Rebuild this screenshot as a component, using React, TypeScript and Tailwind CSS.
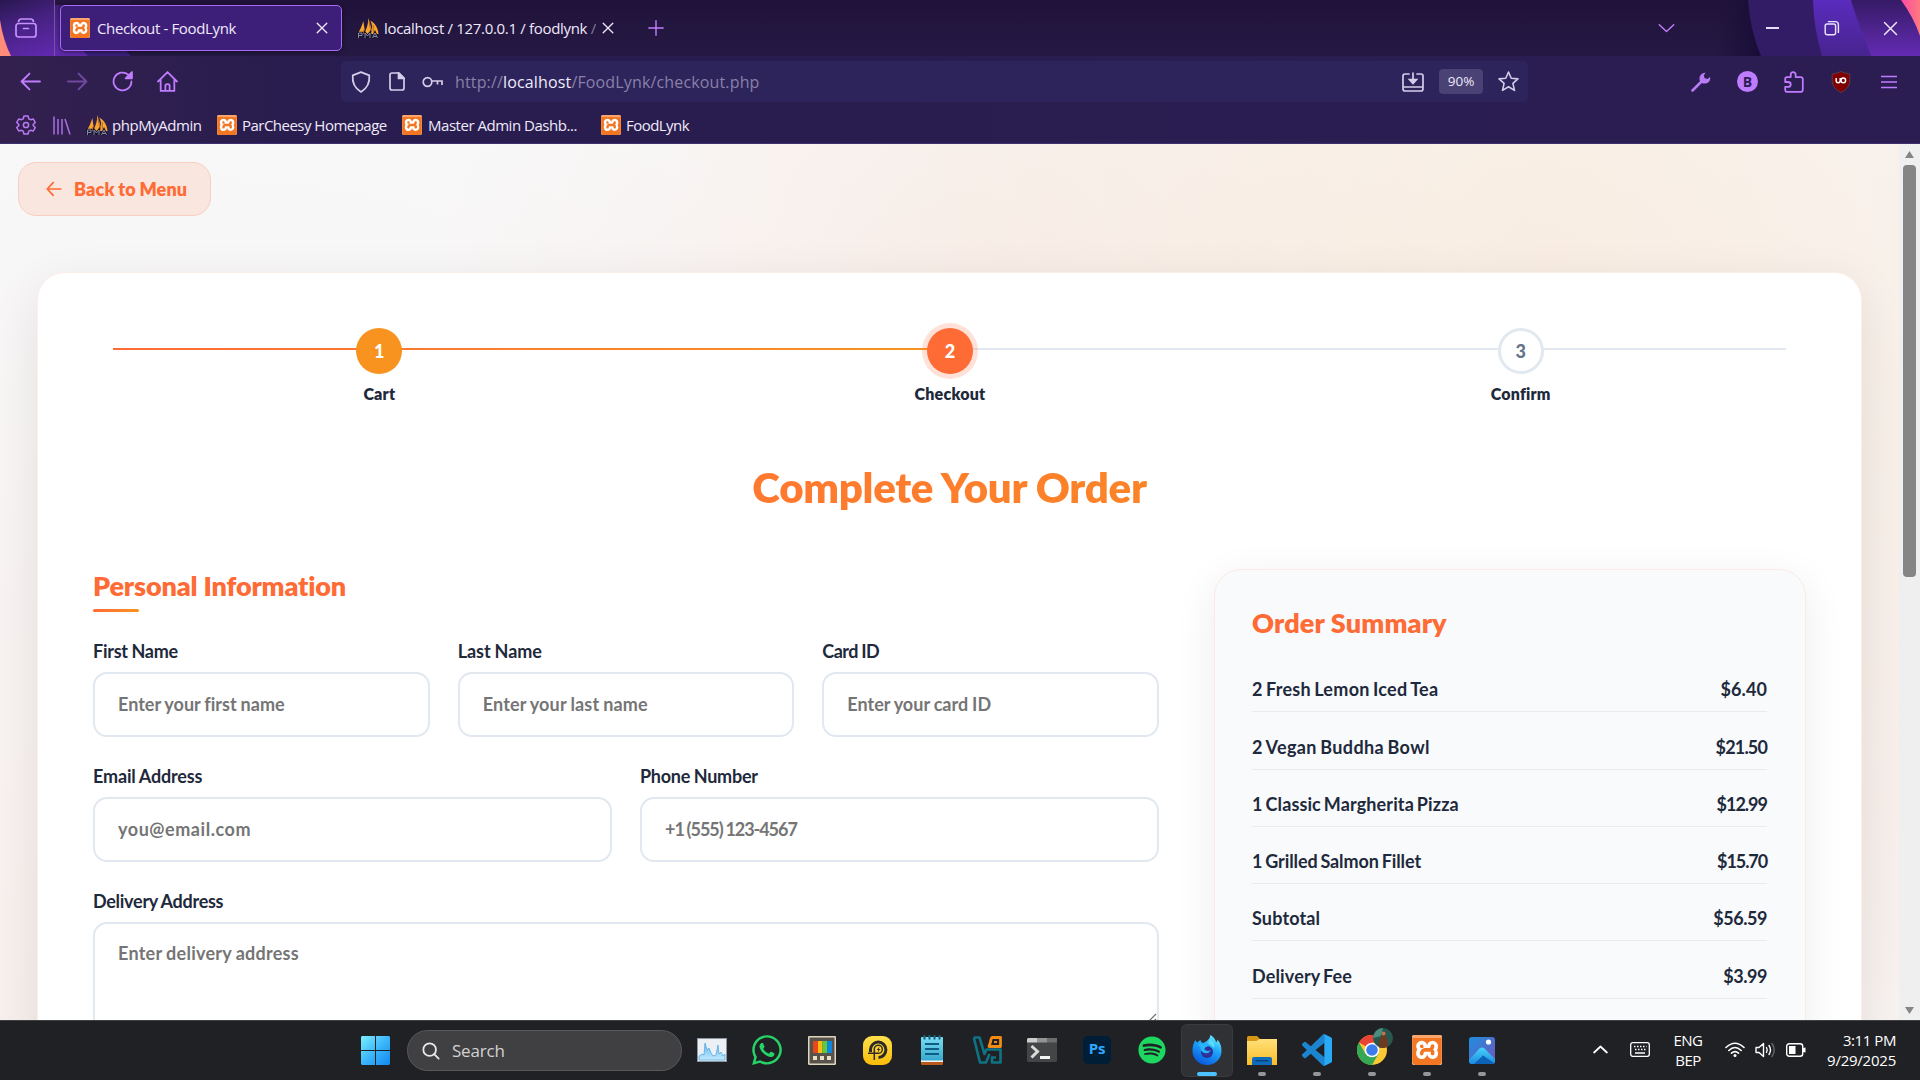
import type { ReactNode } from "react";
import { FaWhatsapp, FaSpotify } from "react-icons/fa";
import { SiXampp } from "react-icons/si";

const uiFont = "font-['Open_Sans','Noto_Sans',sans-serif]";
const pageFont = "font-['Lato','Open_Sans',sans-serif]";

function Stroke({ size = 20, w = 1.6, className = "", children }: { size?: number; w?: number; className?: string; children: ReactNode }) {
  return (
    <svg width={size} height={size} viewBox="0 0 20 20" fill="none" stroke="currentColor" strokeWidth={w} strokeLinecap="round" strokeLinejoin="round" className={`shrink-0 ${className}`}>
      {children}
    </svg>
  );
}

const XamppIcon = ({ size = 20 }: { size?: number }) => (
  <span className="relative flex shrink-0">
    <SiXampp size={size} className="rounded-[2px] bg-white text-[#f37623]" />
    <span className="absolute inset-x-px top-0 h-[10%] bg-[#f9a56c]" />
  </span>
);

function PmaIcon() {
  return (
    <svg width="22" height="21" viewBox="0 0 22 21" className="shrink-0">
      <path d="M0.500 16C3 12 5 8 6.300 3L8.300 16ZM7 16C10 10 11.300 6 11.300 0L16 16ZM14 16C15.800 11 15.300 6 13.300 2.500C18.500 5.500 21 10 21.500 16Z" fill="#fba42e" />
      <path d="M12 4L14 14M16.300 7V14" stroke="#7d4a1c" strokeWidth="0.600" />
      <path d="M1.500 20V15H5V17.500H1.500M8 20V15L10.500 18L13 15V20M15.500 20L18 15L20.500 20M16.500 18.500H19.500" fill="none" stroke="#14132b" strokeWidth="2.600" />
      <path d="M1.500 20V15H5V17.500H1.500M8 20V15L10.500 18L13 15V20M15.500 20L18 15L20.500 20M16.500 18.500H19.500" fill="none" stroke="#9696b0" strokeWidth="0.900" />
    </svg>
  );
}

const CloseX = ({ className = "" }: { className?: string }) => (
  <Stroke size={12} w={2.200} className={className}>
    <path d="M2 2L18 18M18 2L2 18" />
  </Stroke>
);

function TabStrip() {
  return (
    <div className="relative flex h-14 w-full shrink-0 items-center bg-linear-to-b from-[#20123a] to-[#251944]">
      <svg className="absolute inset-0" width="1920" height="56" viewBox="0 0 1920 56">
        <defs>
          <linearGradient id="lp" x1="0" y1="0" x2="0.5" y2="1"><stop offset="0" stopColor="#29174f" /><stop offset="0.4" stopColor="#44217f" /><stop offset="1" stopColor="#6029ad" /></linearGradient>
          <linearGradient id="rp" x1="0" y1="0" x2="0" y2="1"><stop offset="0" stopColor="#351b66" /><stop offset="1" stopColor="#642bb3" /></linearGradient>
          <linearGradient id="rb" x1="0" y1="0" x2="0" y2="1"><stop offset="0" stopColor="#5a2bbd" /><stop offset="1" stopColor="#47248f" /></linearGradient>
          <linearGradient id="pk" x1="0" y1="0" x2="1" y2="0"><stop offset="0" stopColor="#ff4aa2" /><stop offset="1" stopColor="#ff7a80" /></linearGradient>
          <linearGradient id="sh" x1="0" y1="0" x2="1" y2="0"><stop offset="0" stopColor="#1b0f36" stopOpacity="0" /><stop offset="1" stopColor="#180d38" /></linearGradient>
        </defs>
        <path d="M54 0H92Q105 30 131 56H54Z" fill="#3a1f7c" />
        <path d="M0 0H58Q68 34 88 56H0Z" fill="url(#lp)" />
        <path d="M54 0H131V5H54Z" fill="#24143f" />
        <path d="M0 20Q3 40 11 56H0Z" fill="#ff8c78" />
        <rect x="1715" width="46" height="56" fill="url(#sh)" />
        <path d="M1748 0Q1750 30 1761 56H1830V0Z" fill="#331c66" />
        <path d="M1813 0Q1814 30 1822 56H1880V0Z" fill="url(#rb)" />
        <path d="M1851 0Q1860 30 1871.500 56H1920V0Z" fill="url(#rp)" />
        <path d="M1901 0Q1914 18 1920 36V0Z" fill="url(#pk)" />
      </svg>
      <div className="relative flex h-14 w-[55px] items-center justify-center border-r border-[#75559f] text-[#c792ff]">
        <svg width="22" height="20" viewBox="0 0 22 20" fill="none" stroke="currentColor" strokeWidth="1.700" strokeLinecap="round" className="-ml-[2px]">
          <path d="M3.500 3.500Q4 1 6.500 1H15.500Q18 1 18.500 3.500M8.500 10.500H13.500" />
          <rect x="1" y="5.500" width="20" height="13.500" rx="2.500" />
        </svg>
      </div>
      <div className="relative ml-[5px] flex h-[46px] w-[282px] items-center rounded-[5px] border-[1.500px] border-[#a86bf7] bg-[#3d1f7a] pr-[13px] pl-[9px] shadow-[0_1px_4px_#0008]">
        <XamppIcon />
        <span className="ml-[7px] flex-1 text-[15px] tracking-[-0.350px] text-[#f0e9fb]">Checkout - FoodLynk</span>
        <CloseX className="text-[#f0e9fb]" />
      </div>
      <div className="relative flex w-[272px] items-center pl-[15px]">
        <PmaIcon />
        <span className="ml-[5px] w-[212px] overflow-hidden text-[15px] tracking-[-0.320px] whitespace-nowrap text-[#f0e9fb]">
          localhost / 127.0.0.1 / foodlynk <span className="text-[#877a9c]">/</span>
        </span>
        <CloseX className="ml-[6px] text-[#f0e9fb]" />
      </div>
      <Stroke size={16} w={1.800} className="relative ml-[34px] text-[#c07cff]"><path d="M10 1V19M1 10H19" /></Stroke>
      <div className="relative ml-auto flex items-center pr-[22px]">
        <Stroke size={17} w={1.700} className="text-[#c07cff]"><path d="M1.500 5.500L10 13.500L18.500 5.500" /></Stroke>
        <span className="ml-[91px] h-[2px] w-[13px] bg-[#e4ddf5]" />
        <Stroke size={16} w={1.800} className="ml-[45px] text-[#e9e2fb]"><rect x="1.500" y="5" width="13" height="13.500" rx="2.500" /><path d="M5.500 2H14Q18 2 18 6V15.500" /></Stroke>
        <Stroke size={15} w={1.900} className="ml-[43px] text-[#f0e9fb]"><path d="M2 2L18 18M18 2L2 18" /></Stroke>
      </div>
    </div>
  );
}

function NavBar() {
  return (
    <div className="flex h-[51px] items-center pr-[23px] pl-5 text-[#c07cff]">
      <Stroke size={21} w={1.800}><path d="M19 10H1.500M9 2.500L1.500 10L9 17.500" /></Stroke>
      <Stroke size={21} w={1.800} className="ml-[26px] opacity-45"><path d="M1 10H18.500M11 2.500L18.500 10L11 17.500" /></Stroke>
      <Stroke size={21} w={1.700} className="ml-[24px]"><path d="M18.500 10A8.500 8.500 0 1 1 15.500 3.500" /><path d="M19 1V7H13Z" fill="currentColor" /></Stroke>
      <Stroke size={21} w={1.700} className="ml-[24px]"><path d="M1 10L10 1L19 10M3.500 8V19H16.500V8M8 19V14Q8 12.500 10 12.500Q12 12.500 12 14V19" /></Stroke>
      <div className="ml-[163px] flex h-[41px] w-[1187px] items-center rounded-[5px] bg-[#2d245b] pr-[9px] pl-[9px] text-[#d6cdea]">
        <Stroke size={22} w={1.600}><path d="M10 1L17.500 4Q18.500 14 10 19Q1.500 14 2.500 4Z" /></Stroke>
        <svg width="16" height="19" viewBox="0 0 16 19" fill="none" stroke="currentColor" strokeWidth="1.700" className="ml-[17px]"><path d="M10 1H3Q1 1 1 3V16Q1 18 3 18H13Q15 18 15 16V6Z" strokeLinejoin="round" /><path d="M9.500 1V6.500H15Z" fill="currentColor" /></svg>
        <svg width="21" height="12" viewBox="0 0 21 12" fill="none" stroke="currentColor" strokeWidth="1.700" className="ml-[17px]"><circle cx="5.500" cy="6" r="4.300" /><path d="M10 5H20V9M15.500 5V8.500" /></svg>
        <span className="ml-[12px] text-[16px] tracking-[0.150px] text-[#8a80a8]">
          http://<span className="text-[#f0ebfa]">localhost</span>/FoodLynk/checkout.php
        </span>
        <svg width="22" height="20" viewBox="0 0 22 20" fill="none" stroke="currentColor" strokeWidth="1.700" strokeLinecap="round" className="ml-auto"><path d="M7 2H3Q1 2 1 4V16.500Q1 19 3 19H19Q21 19 21 16.500V4Q21 2 19 2H15M1 15H21M11 1V9" /><path d="M7.500 7.500H14.500L11 11.500Z" fill="currentColor" /></svg>
        <span className="ml-[15px] flex h-[25px] w-[44px] items-center justify-center rounded-[4px] bg-[#4a4174] text-[13.500px] text-[#eee9fa]">90%</span>
        <Stroke size={21} w={1.500} className="ml-[15px]"><path d="M10 1L12.600 6.900L19 7.500L14.200 11.800L15.700 18.500L10 15L4.300 18.500L5.800 11.800L1 7.500L7.400 6.900Z" /></Stroke>
      </div>
      <svg width="20" height="20" viewBox="0 0 20 20" className="ml-auto text-[#b87bf5]"><path d="M1.500 18.500L11 9" stroke="currentColor" strokeWidth="2.600" strokeLinecap="round" /><path d="M14.500 0.800L12.800 3.500L13.700 6.300L16.500 7L19 5Q20 8.500 16.800 10.700Q13.500 12.300 10.700 11L9 9.300Q7.500 5.500 9.800 2.800Q12 0.500 14.500 0.800Z" fill="currentColor" /></svg>
      <span className="ml-[26px] flex h-[21px] w-[21px] items-center justify-center rounded-full bg-[#c07cff] text-[14px] font-bold text-[#2b1d52]">B</span>
      <Stroke size={22} w={1.600} className="ml-[25px]"><path d="M2 7Q2 5.500 3.500 5.500H7V3.500Q7 1 9.200 1Q11.500 1 11.500 3.500V5.500H16Q18 5.500 18 7.500V17Q18 19 16 19H4Q2 19 2 17V14.500H4.500Q7 14.500 7 12.200Q7 10 4.500 10H2Z" /></Stroke>
      <svg width="20" height="22" viewBox="0 0 20 22" className="ml-[26px]"><path d="M10 0.500Q14 2.500 18.800 3V10Q18.800 17 10 21.500Q1.200 17 1.200 10V3Q6 2.500 10 0.500Z" fill="#800000" stroke="#5a3a4c" strokeWidth="1" /><path d="M5.200 7V9.700Q5.200 11.700 7.200 11.700Q9.200 11.700 9.200 9.700V7" fill="none" stroke="#fff" strokeWidth="1.500" /><circle cx="12.300" cy="9.400" r="2.300" fill="none" stroke="#fff" strokeWidth="1.500" /></svg>
      <Stroke size={16} w={1.900} className="ml-[30px]"><path d="M0.500 3H19.500M0.500 10H19.500M0.500 17H19.500" /></Stroke>
    </div>
  );
}

function BookmarksBar() {
  return (
    <div className="flex h-[36px] items-center pl-4 text-[15px] whitespace-nowrap text-[#f0e9fb]">
      <Stroke size={20} w={1.500} className="text-[#b87bf5]"><path d="M8 1H12L12.800 3.800L14.500 4.700L17.300 4L19.200 7.400L17.200 9.500V10.500L19.200 12.600L17.300 16L14.500 15.300L12.800 16.200L12 19H8L7.200 16.200L5.500 15.300L2.700 16L0.800 12.600L2.800 10.500V9.500L0.800 7.400L2.700 4L5.500 4.700L7.200 3.800Z" /><circle cx="10" cy="10" r="2.600" /></Stroke>
      <svg width="18" height="19" viewBox="0 0 18 19" stroke="#a86fe0" strokeWidth="1.500" className="ml-[17px]"><path d="M1 0.500V18.500M5 3V18.500M9 3V18.500M12 3L17 18.500" /></svg>
      <span className="ml-[15px]"><PmaIcon /></span>
      <span className="ml-[4px] w-[105px] tracking-[-0.450px]">phpMyAdmin</span>
      <XamppIcon />
      <span className="ml-[5px] w-[160px] tracking-[-0.520px]">ParCheesy Homepage</span>
      <XamppIcon />
      <span className="ml-[6px] w-[173px] tracking-[-0.470px]">Master Admin Dashb...</span>
      <XamppIcon />
      <span className="ml-[5px] tracking-[-0.550px]">FoodLynk</span>
    </div>
  );
}

const steps = [
  { n: "1", label: "Cart", circle: "bg-[#f7931e] text-white" },
  { n: "2", label: "Checkout", circle: "bg-[#ff6b35] text-white shadow-[0_0_0_5px_rgba(255,107,53,0.2)]" },
  { n: "3", label: "Confirm", circle: "border-[3px] border-[#e2e8f0] bg-white text-[#64748b]" },
];

function Stepper() {
  return (
    <div className="relative grid grid-cols-3">
      <div className="absolute top-[20px] left-[19px] flex h-[2px] w-[1673px]">
        <span className="h-full w-1/2 bg-linear-to-r from-[#ff6b35] to-[#f7931e]" />
        <span className="h-full w-1/2 bg-[#e2e8f0]" />
      </div>
      {steps.map((s) => (
        <div key={s.n} className="relative flex flex-col items-center">
          <span className={`flex h-[46px] w-[46px] items-center justify-center rounded-full text-[18px] font-black ${s.circle}`}>{s.n}</span>
          <span className="mt-[9px] text-[16px] leading-[22px] font-extrabold tracking-[0.200px] text-[#1e293b]">{s.label}</span>
        </div>
      ))}
    </div>
  );
}

function Field({ label, placeholder, labelTrack = "tracking-[-0.250px]", track = "tracking-[0.020px]" }: { label: string; placeholder: string; labelTrack?: string; track?: string }) {
  return (
    <label className="flex min-w-0 flex-1 flex-col">
      <span className={`text-[18px] leading-[22px] font-bold [word-spacing:-0.500px] text-[#1e293b] ${labelTrack}`}>{label}</span>
      <input placeholder={placeholder} className={`mt-[10px] h-[65px] w-full rounded-[14px] border-2 border-[#e2e8f0] bg-white px-[23px] pb-[2px] text-[18px] font-bold [word-spacing:-0.500px] placeholder:text-[#757575] ${track}`} />
    </label>
  );
}

const orderLines = [
  ["2 Fresh Lemon Iced Tea", "$6.40", "tracking-[0.300px]", "tracking-[0.100px]"],
  ["2 Vegan Buddha Bowl", "$21.50", "tracking-[0.400px]", "tracking-[-0.850px]"],
  ["1 Classic Margherita Pizza", "$12.99", "tracking-[0.110px]", "tracking-[-1px]"],
  ["1 Grilled Salmon Fillet", "$15.70", "tracking-[-0.080px]", "tracking-[-1.100px]"],
  ["Subtotal", "$56.59", "tracking-[0.150px]", "tracking-[-0.450px]"],
  ["Delivery Fee", "$3.99", "tracking-[0.150px]", "tracking-[-0.450px]"],
];

function OrderSummary() {
  return (
    <aside className="h-[700px] w-[592px] shrink-0 rounded-[27px] border border-[#fdeae4] bg-[#f8fafc] pr-[38px] pl-[37px] pt-[37px] shadow-[0_10px_40px_rgba(0,0,0,0.08)]">
      <h2 className="text-[27px] leading-[32px] font-extrabold tracking-[0.150px] text-[#ff6b35]">Order Summary</h2>
      <div className="mt-[16px]">
        {orderLines.map(([name, price, track, priceTrack]) => (
          <div key={name} className="flex h-[57.300px] items-end justify-between border-b border-[#e9ebee] pb-[11px] text-[18px] leading-[22px] font-bold text-[#1e293b]">
            <span className={`[word-spacing:-1.500px] ${track}`}>{name}</span>
            <span className={priceTrack}>{price}</span>
          </div>
        ))}
      </div>
    </aside>
  );
}

function CheckoutPage() {
  return (
    <div className={`flex min-h-0 flex-1 ${pageFont}`}>
      <main className="h-full w-[1899px] overflow-hidden bg-[#f8f9fa] bg-[radial-gradient(circle_at_80%_10%,rgba(255,170,80,0.12),transparent_50%),radial-gradient(circle_at_10%_110%,rgba(255,107,53,0.08),transparent_55%),radial-gradient(circle_at_50%_20%,rgba(255,107,53,0.07),transparent_45%),radial-gradient(circle_at_100%_80%,rgba(255,107,53,0.06),transparent_50%)] pt-[18px]">
        <button className="ml-[18px] flex h-[54px] w-[193px] items-center rounded-[18px] border border-[#f9cfc1] bg-[#ff6b35]/12 pl-[27px] text-[18px] font-extrabold text-[#ff6b35]">
          <Stroke size={16} w={2.100}><path d="M18.500 10H1.500M9 2L1.500 10L9 18" /></Stroke>
          <span className="ml-[12px] tracking-[0.150px] [word-spacing:-0.700px]">Back to Menu</span>
        </button>
        <section className="mt-[56px] ml-[37px] h-[900px] w-[1825px] rounded-[28px] border border-[#fdeee9] bg-white px-[55px] pt-[55px] shadow-[0_15px_50px_rgba(0,0,0,0.09)]">
          <div className="pr-0 pl-px"><Stepper /></div>
          <h1 className="mt-[57px] text-center text-[42px] leading-[50px] font-extrabold tracking-[-0.300px]">
            <span className="bg-linear-to-r from-[#ff7830] to-[#fb8427] bg-clip-text text-transparent">Complete Your Order</span>
          </h1>
          <div className="mt-[57px] flex justify-between">
            <form className="flex w-[1066px] flex-col">
              <h2 className="pt-px text-[27px] leading-[32px] font-extrabold tracking-[-0.150px] text-[#ff6b35]">Personal Information</h2>
              <span className="mt-[7px] h-[3px] w-[46px] rounded-full bg-linear-to-r from-[#ff6b35] to-[#f7931e]" />
              <div className="mt-[28px] flex gap-[28px]">
                <Field label="First Name" placeholder="Enter your first name" />
                <Field label="Last Name" placeholder="Enter your last name" labelTrack="tracking-[-0.020px]" track="tracking-[0.150px]" />
                <Field label="Card ID" placeholder="Enter your card ID" labelTrack="tracking-[-0.550px]" />
              </div>
              <div className="mt-[28px] flex gap-[28px]">
                <Field label="Email Address" placeholder="you@email.com" labelTrack="tracking-[-0.150px]" track="tracking-[0.550px]" />
                <Field label="Phone Number" placeholder="+1 (555) 123-4567" track="tracking-[-1.050px]" />
              </div>
              <label className="mt-[28px] flex flex-col">
                <span className="text-[18px] leading-[22px] font-bold tracking-[-0.280px] [word-spacing:-0.500px] text-[#1e293b]">Delivery Address</span>
                <span className="relative mt-[10px] flex h-[116px]">
                  <textarea placeholder="Enter delivery address" className="h-full w-full resize-none rounded-[14px] border-2 border-[#e2e8f0] bg-white px-[23px] pt-[18px] text-[18px] leading-[22px] font-bold tracking-[0.250px] [word-spacing:-0.500px] placeholder:text-[#757575]" />
                  <svg width="10" height="10" viewBox="0 0 10 10" className="absolute right-[2px] bottom-[15px]" stroke="#6b6b6b" strokeWidth="1.200"><path d="M1 9L9 1M6 9L9 6" /></svg>
                </span>
              </label>
            </form>
            <OrderSummary />
          </div>
        </section>
      </main>
      <div className="flex w-[21px] flex-col items-center bg-[#efefef] pt-[7px] pb-[6px]">
        <svg width="9" height="7" viewBox="0 0 9 7" fill="#858585"><path d="M4.500 0L9 7H0Z" /></svg>
        <span className="mt-[7px] h-[412px] w-[13px] rounded-[4px] bg-[#858585]" />
        <svg width="9" height="7" viewBox="0 0 9 7" fill="#858585" className="mt-auto"><path d="M4.500 7L9 0H0Z" /></svg>
      </div>
    </div>
  );
}

const WindowsLogo = () => (
  <svg width="29" height="29" viewBox="0 0 29 29">
    <defs><linearGradient id="win" x1="0" y1="0" x2="1" y2="1"><stop offset="0" stopColor="#7df0ff" /><stop offset="0.500" stopColor="#3cb6fa" /><stop offset="1" stopColor="#1289f0" /></linearGradient></defs>
    <path d="M1 0H14V14H0V1ZM15 0H28L29 1V14H15ZM0 15H14V29H1L0 28ZM15 15H29V28L28 29H15Z" fill="url(#win)" />
  </svg>
);

const TaskManager = () => (
  <svg width="30" height="24" viewBox="0 0 30 24">
    <defs><linearGradient id="tm" x1="0" y1="0" x2="0" y2="1"><stop offset="0" stopColor="#5db7f2" /><stop offset="1" stopColor="#c4e9fd" /></linearGradient></defs>
    <rect x="0.500" y="0.500" width="29" height="23" fill="#eceff3" stroke="#8d96a3" />
    <path d="M2 18L5 16L7 17L8 5L10 12L12 10L14 15L16 18L19 17L21 7L22 16L24 14L26 18L28 16V22H2Z" fill="url(#tm)" stroke="#4da5de" strokeWidth="0.700" />
  </svg>
);

const PowerToys = () => (
  <svg width="28" height="29" viewBox="0 0 28 29">
    <rect x="0.700" y="0.700" width="26.600" height="27.600" rx="1" fill="#57534c" stroke="#e0d6bc" strokeWidth="1.600" />
    <rect x="5" y="5" width="5" height="12" fill="#e8471c" /><rect x="10" y="5" width="4.500" height="12" fill="#fcb813" /><rect x="14.500" y="5" width="4.500" height="12" fill="#5fcb3b" /><rect x="19" y="5" width="5" height="12" fill="#0d86dd" />
    <path d="M5 20H9V24H5ZM12 20H16V24H12ZM19 20H23V24H19Z" fill="#e9dfc6" />
  </svg>
);

const PotPlayer = () => (
  <svg width="29" height="29" viewBox="0 0 29 29">
    <defs><linearGradient id="pot" x1="0" y1="0" x2="0" y2="1"><stop offset="0" stopColor="#ffe04d" /><stop offset="1" stopColor="#f9bd09" /></linearGradient></defs>
    <rect width="29" height="29" rx="9" fill="url(#pot)" />
    <path d="M7.500 16V13.500A7.700 7.700 0 1 1 15.500 21.500" fill="none" stroke="#2c2b29" strokeWidth="3" />
    <path d="M11.300 24V13.500A4 4 0 1 1 15.500 17.300H5" fill="none" stroke="#2c2b29" strokeWidth="1.500" />
    <path d="M16.500 10.500L13.800 14H15.300L14.700 16.500L17.300 13H15.800Z" fill="#2c2b29" />
  </svg>
);

const Notepad = () => (
  <svg width="22" height="30" viewBox="0 0 22 30">
    <defs><linearGradient id="note" x1="0" y1="0" x2="0" y2="1"><stop offset="0" stopColor="#7ddcf2" /><stop offset="1" stopColor="#36a9cf" /></linearGradient></defs>
    <rect y="26" width="22" height="4" rx="1" fill="#b75a1c" /><rect y="24" width="22" height="3" fill="#f4f4f4" />
    <rect y="2" width="22" height="23.500" rx="1" fill="url(#note)" />
    <path d="M4 9H18M4 14H18M4 19H18" stroke="#0e5d85" strokeWidth="1.900" />
    <path d="M3.500 0V4.500M8.500 0V4.500M13.500 0V4.500M18.500 0V4.500" stroke="#13607f" strokeWidth="2" />
  </svg>
);

const VirtualBoxMark = () => (
  <svg width="30" height="28" viewBox="0 0 30 28" fill="none" strokeLinejoin="round">
    <path d="M1.800 1.500H7.500L12.500 18L14.500 13.500H28.500V26.500H20V21.500H24" stroke="#0f7386" strokeWidth="2.600" />
    <path d="M1.800 1.500L8 26.500H14L17.500 18" stroke="#0f7386" strokeWidth="2.600" />
    <path d="M20.500 1.500H28.500V10.500H17L18.500 6Q19 1.500 20.500 1.500Z" stroke="#f08c13" strokeWidth="2.800" />
    <path d="M22 6H25" stroke="#f08c13" strokeWidth="2" />
  </svg>
);

const Terminal = () => (
  <svg width="30" height="24" viewBox="0 0 30 24">
    <rect width="30" height="24" rx="1.500" fill="#444546" /><path d="M0 4.500V1.500Q0 0 1.500 0H10V4.500Z" fill="#cdcdcd" /><rect x="10" width="10" height="4.500" fill="#939393" /><rect x="20" width="10" height="4.500" fill="#6d6d6d" />
    <path d="M4.500 8L10.500 13.500L4.500 19.500" fill="none" stroke="#dadada" strokeWidth="3" /><rect x="13" y="18" width="10" height="3" fill="#f3f3f3" />
  </svg>
);

const Photoshop = () => (
  <span className="flex h-[28px] w-[28px] items-center justify-center rounded-[5px] bg-[#001e36] pb-[3px] text-[15px] font-bold tracking-[-0.300px] text-[#31a8ff]">Ps</span>
);

const Firefox = () => (
  <svg width="30" height="30" viewBox="0 0 30 30">
    <defs>
      <linearGradient id="ffx" x1="0.800" y1="0" x2="0.300" y2="1"><stop offset="0" stopColor="#6bf0ff" /><stop offset="0.450" stopColor="#1ca2fb" /><stop offset="1" stopColor="#0a56dd" /></linearGradient>
      <radialGradient id="ffc"><stop offset="0" stopColor="#4434a8" /><stop offset="1" stopColor="#232f8f" /></radialGradient>
    </defs>
    <path d="M3.500 5Q4 7 5.500 7.500Q7 5.500 8.500 5Q8.500 7.500 11 8Q14 7 16 5Q18 3 18.500 0Q23 3 24 7Q25.500 7 25.500 4.500Q29.500 9 29.500 16A14.500 14 0 0 1 0.500 16Q0.500 9 3.500 5Z" fill="url(#ffx)" />
    <circle cx="15" cy="17" r="6" fill="url(#ffc)" />
    <path d="M6 10Q8 7.500 12 9.500Q16 9.500 15.500 11.500Q12.500 12 12.500 14.500Q15 17 19 15Q16 20 11 17.500Q8 15 8.500 12Z" fill="#27b5f8" />
    <path d="M17 4Q24 7 22 13Q20 10 16.500 9Z" fill="#57dcfc" />
  </svg>
);

const Folder = () => (
  <svg width="30" height="29" viewBox="0 0 30 29">
    <defs><linearGradient id="fold" x1="0" y1="0" x2="0" y2="1"><stop offset="0" stopColor="#ffe07a" /><stop offset="1" stopColor="#fabd28" /></linearGradient></defs>
    <path d="M0 1.500Q0 0 1.500 0H10L13 3V10H0Z" fill="#d89614" /><path d="M0 5H9.500L12.500 3H30V29H0Z" fill="url(#fold)" />
    <path d="M5 29V23Q5 21 7 21H23Q25 21 25 23V29Z" fill="#0f6cbd" /><rect x="8.500" y="24" width="13" height="1.500" fill="#0a437c" />
  </svg>
);

const VsCode = () => (
  <svg width="30" height="32" viewBox="0 0 24 24" preserveAspectRatio="none">
    <path d="M23.150 2.587L18.210.210a1.494 1.494 0 0 0-1.705.290l-9.460 8.630-4.120-3.128a.999.999 0 0 0-1.276.057L.327 7.261A1 1 0 0 0 .326 8.740L3.899 12 .326 15.260a1 1 0 0 0 .001 1.479L1.650 17.940a.999.999 0 0 0 1.276.057l4.120-3.128 9.460 8.630a1.492 1.492 0 0 0 1.704.290l4.942-2.377A1.500 1.500 0 0 0 24 20.060V3.939a1.500 1.500 0 0 0-.850-1.352zm-5.146 14.861L10.826 12l7.178-5.448v10.896z" fill="#1b86cf" />
    <path d="M18 0.100L23.200 2.600Q24 3 24 4V20Q24 21 23.200 21.400L18 23.900Z" fill="#2aa9f5" />
  </svg>
);

const Chrome = () => (
  <span className="relative flex">
    <svg width="30" height="30" viewBox="0 0 30 30">
      <circle cx="15" cy="15" r="15" fill="#fcc934" />
      <path d="M15 15L2 7.500A15 15 0 0 1 28 7.500H15Z" fill="#ea4335" />
      <path d="M2 7.500A15 15 0 0 0 15 30L21.500 18.750L8.500 18.750Z" fill="#34a853" />
      <circle cx="15" cy="15" r="7.300" fill="#fff" /><circle cx="15" cy="15" r="5.800" fill="#3b7ded" />
    </svg>
    <svg width="20" height="20" viewBox="0 0 20 20" className="absolute -top-[7px] -right-[6px]">
      <circle cx="10" cy="10" r="10" fill="#27574e" /><path d="M0 10A10 10 0 0 1 10 0L8 8Z" fill="#4b8c80" />
      <path d="M6 19.500Q5 11 9 9Q7.500 4 10.500 3.500Q13.500 4 12.500 8.500Q16 11 15 18.500Q10.500 21 6 19.500Z" fill="#6b3a22" /><circle cx="10.500" cy="5.500" r="2" fill="#b9774c" />
    </svg>
  </span>
);

const Photos = () => (
  <svg width="26" height="27" viewBox="0 0 26 27">
    <defs><linearGradient id="pho" x1="0" y1="0" x2="1" y2="1"><stop offset="0" stopColor="#1c8fe0" /><stop offset="1" stopColor="#7554b8" /></linearGradient><linearGradient id="mnt" x1="0" y1="0" x2="0" y2="1"><stop offset="0" stopColor="#48d3fb" /><stop offset="1" stopColor="#1c8ae0" /></linearGradient></defs>
    <rect width="26" height="27" rx="3" fill="url(#pho)" /><path d="M0 23L10.500 11.500Q13 9.500 15.500 11.500L26 22V24Q26 27 23 27H3Q0 27 0 24Z" fill="url(#mnt)" /><path d="M5 27L14 18.500L25 26Q24.500 27 23 27Z" fill="#0c62b8" /><circle cx="19.500" cy="5" r="2.600" fill="#fff" />
  </svg>
);

const apps: { id: string; icon: ReactNode; state?: "active" | "open" }[] = [
  { id: "task", icon: <TaskManager /> },
  { id: "whatsapp", icon: <FaWhatsapp size={34} color="#25d366" /> },
  { id: "powertoys", icon: <PowerToys /> },
  { id: "potplayer", icon: <PotPlayer /> },
  { id: "notepad", icon: <Notepad /> },
  { id: "vb", icon: <VirtualBoxMark /> },
  { id: "terminal", icon: <Terminal /> },
  { id: "ps", icon: <Photoshop /> },
  { id: "spotify", icon: <FaSpotify size={28} color="#1ed760" /> },
  { id: "firefox", icon: <Firefox />, state: "active" },
  { id: "folder", icon: <Folder />, state: "open" },
  { id: "vscode", icon: <VsCode />, state: "open" },
  { id: "chrome", icon: <Chrome />, state: "open" },
  { id: "xampp", icon: <XamppIcon size={30} />, state: "open" },
  { id: "photos", icon: <Photos />, state: "open" },
];

function Taskbar() {
  return (
    <div className="flex h-[60px] shrink-0 items-center border-t border-[#3f4042] bg-[#202124] pl-[361px] text-white">
      <WindowsLogo />
      <div className="ml-[17px] flex h-[41px] w-[275px] items-center rounded-full border border-[#59595b] bg-[#404042] pl-[14px] text-[17px] tracking-[-0.200px] text-[#d2d2d2]">
        <Stroke size={18} w={2} className="text-[#e8e8e8]"><circle cx="8.500" cy="8.500" r="7" /><path d="M13.500 13.500L18.500 18.500" /></Stroke>
        <span className="ml-[12px]">Search</span>
      </div>
      <div className="-mt-px ml-[5px] flex gap-[5px]">
        {apps.map((a) => (
          <div key={a.id} className={`relative flex h-[51px] w-[50px] items-center justify-center rounded-[5px] ${a.state === "active" ? "bg-[#303134] ring-1 ring-[#3a3b3e]" : ""}`}>
            {a.icon}
            {a.state && <span className={`absolute bottom-0 h-[4px] rounded-full ${a.state === "active" ? "w-[20px] bg-[#4cc2ff]" : "w-[8px] bg-[#959697]"}`} />}
          </div>
        ))}
      </div>
      <div className="-mt-[2px] ml-auto flex items-center pr-[24px]">
        <Stroke size={15} w={2.300}><path d="M1.500 14L10 6L18.500 14" /></Stroke>
        <svg width="20" height="15" viewBox="0 0 20 15" fill="none" stroke="#fff" strokeWidth="1.300" className="ml-[22px]"><rect x="0.700" y="0.700" width="18.600" height="13.600" rx="2" /><path d="M4 4.500H16.500M5 7.500H16" strokeDasharray="1.500 1.500" /><path d="M5 11H15" strokeWidth="1.500" /></svg>
        <div className="ml-[23px] flex w-[30px] flex-col items-center text-[15px] leading-[20px] tracking-[-0.500px]"><span>ENG</span><span>BEP</span></div>
        <svg width="20" height="16" viewBox="0 0 20 16" fill="none" stroke="#fff" strokeWidth="1.600" strokeLinecap="round" className="ml-[22px]"><path d="M1 5.500Q10 -3 19 5.500M3.800 8.500Q10 2.500 16.200 8.500M6.500 11.200Q10 8 13.500 11.200" /><circle cx="10" cy="13.500" r="1.500" fill="#fff" stroke="none" /></svg>
        <svg width="21" height="18" viewBox="0 0 21 18" fill="none" stroke="#fff" strokeWidth="1.400" strokeLinejoin="round" strokeLinecap="round" className="ml-[10px]"><path d="M1 6.500H4L8.500 2.500V15.500L4 11.500H1Z" /><path d="M11.500 6.500Q13 9 11.500 11.500M14 4.500Q17 9 14 13.500" /><path d="M17 2.500Q21.500 9 17 15.500" stroke="#66676a" /></svg>
        <svg width="20" height="14" viewBox="0 0 20 14" fill="none" stroke="#fff" strokeWidth="1.400" className="ml-[10px]"><rect x="0.700" y="0.700" width="16" height="12.600" rx="2.500" /><rect x="3" y="3" width="6.500" height="8" fill="#fff" stroke="none" /><path d="M17 5L19.500 4.500V9.500L17 9Z" fill="#fff" stroke="none" /></svg>
        <div className="ml-[14px] flex w-[76px] flex-col items-end text-[15px] leading-[20px] whitespace-nowrap"><span className="tracking-[-0.440px]">3:11 PM</span><span className="tracking-[-0.230px]">9/29/2025</span></div>
      </div>
    </div>
  );
}

export default function App() {
  return (
    <div className={`flex h-[1080px] w-[1920px] flex-col overflow-hidden ${uiFont}`}>
      <TabStrip />
      <div className="h-[88px] shrink-0 border-b border-[#3b3072] bg-[#281d4e] bg-linear-to-r from-[#33204f] via-[#281d4e] via-15% to-[#2b1d52]">
        <NavBar />
        <BookmarksBar />
      </div>
      <CheckoutPage />
      <Taskbar />
    </div>
  );
}
